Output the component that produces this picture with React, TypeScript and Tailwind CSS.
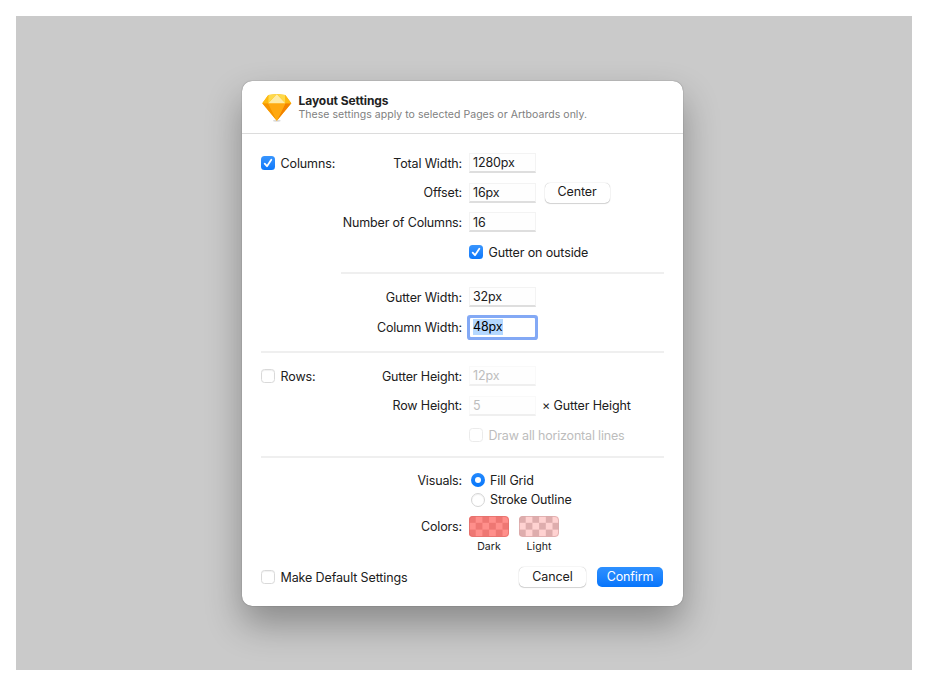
import type { ReactNode } from 'react';
import { clsx } from 'clsx';

function Check({ on, dim, label }: { on?: boolean; dim?: boolean; label: string }) {
  return (
    <div className="flex items-center gap-[5.5px]">
      <span
        className={clsx(
          'flex h-[14px] w-[14px] shrink-0 items-center justify-center rounded-[3.5px]',
          on
            ? 'bg-linear-to-b from-[#3895fd] to-[#0a78fb]'
            : dim
              ? 'border border-[#ebebeb] bg-white'
              : 'border border-[#d9d9d9] bg-white shadow-[inset_0_1px_1px_rgba(0,0,0,0.06)]',
        )}
      >
        {on && (
          <svg width="14" height="14" viewBox="0 0 14 14" fill="none">
            <path d="M3.7 7.6 6 10.2 10.3 3.8" stroke="#fff" strokeWidth="1.8" strokeLinecap="round" strokeLinejoin="round" />
          </svg>
        )}
      </span>
      <span className={clsx('pt-[1px]', dim && 'tracking-[-0.18px] text-[#bdbdbd]')}>{label}</span>
    </div>
  );
}

function Field({ value, dim }: { value: string; dim?: boolean }) {
  return (
    <div
      className={clsx(
        'flex h-[20px] w-[67px] items-center border border-b-2 bg-[#fefefe] pt-[1.5px] pl-[3px]',
        dim ? 'border-[#f9f9f9] border-b-[#efefef] text-[#bdbdbd]' : 'border-[#f3f3f3] border-b-[#dedede]',
      )}
    >
      {value}
    </div>
  );
}

function Row({ left, label, children, className }: { left?: ReactNode; label?: string; children?: ReactNode; className?: string }) {
  return (
    <div className={clsx('flex items-center', className ?? 'h-[20px]')}>
      <div className="flex w-[201px] items-center justify-between">
        <div>{left}</div>
        <div className="pt-[1px] tracking-[-0.16px]">{label}</div>
      </div>
      <div className="ml-[7px] flex items-center">{children}</div>
    </div>
  );
}

function Radio({ on, label }: { on?: boolean; label: string }) {
  return (
    <div className="ml-[2px] flex items-center gap-[5px]">
      <span
        className={clsx(
          'flex h-[14px] w-[14px] items-center justify-center rounded-full',
          on ? 'bg-linear-to-b from-[#2389fd] to-[#0577fb]' : 'border border-[#d5d5d5] bg-white shadow-[inset_0_1px_1px_rgba(0,0,0,0.06)]',
        )}
      >
        {on && <span className="h-[6px] w-[6px] rounded-full bg-white" />}
      </span>
      <span className={on ? 'pt-[1px]' : ''}>{label}</span>
    </div>
  );
}

function Swatch({ base, alt, edge, label }: { base: string; alt: string; edge: string; label: string }) {
  const cells: ReactNode[] = [];
  for (let r = 0; r < 3; r++)
    for (let c = 0; c < 6; c++)
      if ((r + c) % 2 === 0) cells.push(<rect key={`${r}-${c}`} x={c * 6.7} y={r * 6.8} width="6.7" height="6.8" fill={alt} />);
  return (
    <div className="flex flex-col items-center">
      <svg width="40" height="21" viewBox="0 0 40 21" className="rounded-[4px]">
        <rect width="40" height="21" fill={base} />
        {cells}
        <rect x="0.5" y="0.5" width="39" height="20" rx="3.5" fill="none" stroke={edge} strokeOpacity="0.8" />
      </svg>
      <span className="mt-[4px] text-[10.5px] leading-[12px] tracking-[0.05px]">{label}</span>
    </div>
  );
}

function Gem() {
  return (
    <svg width="30" height="30" viewBox="0 0 30 30">
      <ellipse cx="14.8" cy="27.8" rx="3.8" ry="1" fill="#000" opacity="0.14" />
      <path d="M6.3 2 14.8 1l8.5 1 6 8.3-14.5 17.5L.3 10.3z" fill="#fdb300" />
      <path d="M.3 10.3h5.9l8.6 17.5z" fill="#f79400" />
      <path d="M29.3 10.3h-5.9l-8.6 17.5z" fill="#f38200" />
      <path d="M6.2 10.3h17.2l-8.6 17.5z" fill="#ffa910" />
      <path d="M14.8 1 6.2 10.3h17.2z" fill="#feeba6" />
      <path d="M14.8 1 6.3 2l-.1 8.3zM14.8 1l8.5 1 .1 8.3z" fill="#fed94a" />
      <path d="M6.3 2 .3 10.3h5.9zM23.3 2l6 8.3h-5.9z" fill="#fdb912" />
    </svg>
  );
}

export default function App() {
  return (
    <main className="h-[686px] w-[928px] bg-white p-[16px] font-['Inter','Liberation_Sans',sans-serif] text-[12.5px] leading-[16px] tracking-[-0.12px] text-[#202020]">
      <div className="h-[654px] overflow-hidden bg-[#cacaca] pt-[65px] pl-[226px]">
        <section className="h-[525px] w-[441px] rounded-[10px] bg-white whitespace-nowrap shadow-[0_0_1px_rgba(0,0,0,0.6),0_18px_36px_rgba(0,0,0,0.32)]">
          <header className="flex h-[53px] border-b border-[#dcdcdc] pt-[12px] pl-[20px]">
            <Gem />
            <div className="ml-[6.5px]">
              <h1 className="text-[12px] leading-[15px] font-bold tracking-[-0.07px] text-[#222]">Layout Settings</h1>
              <p className="text-[10.5px] leading-[13px] tracking-[0.04px] text-[#808080]">
                These settings apply to selected Pages or Artboards only.
              </p>
            </div>
          </header>
          <div className="pt-[19px] pr-[19px] pl-[19px]">
            <div className="flex flex-col gap-[9.7px]">
              <Row left={<Check on label="Columns:" />} label="Total Width:">
                <Field value="1280px" />
              </Row>
              <Row label="Offset:">
                <Field value="16px" />
                <button className="ml-[8.5px] h-[20px] w-[65px] rounded-[5px] bg-white pb-[1px] shadow-[0_0_1px_rgba(0,0,0,0.35),0_1px_1px_rgba(0,0,0,0.15)]">Center</button>
              </Row>
              <Row label="Number of Columns:">
                <Field value="16" />
              </Row>
              <Row>
                <Check on label="Gutter on outside" />
              </Row>
            </div>
            <div className="mt-[10px] ml-[80px] h-[2px] bg-[#efefef]" />
            <div className="mt-[13px] flex flex-col gap-[10px]">
              <Row label="Gutter Width:">
                <Field value="32px" />
              </Row>
              <Row label="Column Width:">
                <div className="ml-[1px] flex h-[19px] w-[65px] items-center rounded-[1px] bg-white pl-[3px] text-black ring-[3px] ring-[#83a9f5]">
                  <span className="bg-[#b3d7ff]">48px</span>
                </div>
              </Row>
            </div>
            <div className="mt-[14px] h-[2px] bg-[#efefef]" />
            <div className="mt-[13px] flex flex-col gap-[9.7px]">
              <Row left={<Check label="Rows:" />} label="Gutter Height:">
                <Field value="12px" dim />
              </Row>
              <Row label="Row Height:">
                <Field value="5" dim />
                <span className="ml-[6px]">× Gutter Height</span>
              </Row>
              <Row>
                <Check dim label="Draw all horizontal lines" />
              </Row>
            </div>
            <div className="mt-[11px] h-[2px] bg-[#efefef]" />
            <Row label="Visuals:" className="mt-[12px] h-[20px]">
              <Radio on label="Fill Grid" />
            </Row>
            <Row className="h-[19px]">
              <Radio label="Stroke Outline" />
            </Row>
            <div className="mt-[7px] flex items-start">
              <div className="w-[201px] pt-[3px] text-right tracking-[-0.16px]">Colors:</div>
              <div className="ml-[7px] flex gap-[10px]">
                <Swatch base="#ff8f8b" alt="#ee7773" edge="#e46f6b" label="Dark" />
                <Swatch base="#ffd2d1" alt="#deadad" edge="#d9a9a9" label="Light" />
              </div>
            </div>
            <footer className="mt-[14px] flex h-[20px] items-center">
              <Check label="Make Default Settings" />
              <div className="mr-[1px] ml-auto flex gap-[11px]">
                <button className="h-[20px] w-[67px] rounded-[5px] bg-white pb-[1px] shadow-[0_0_1px_rgba(0,0,0,0.35),0_1px_1px_rgba(0,0,0,0.15)]">Cancel</button>
                <button className="h-[20px] w-[66px] rounded-[5px] bg-linear-to-b from-[#2d90ff] to-[#0575fb] pb-[1px] text-white">Confirm</button>
              </div>
            </footer>
          </div>
        </section>
      </div>
    </main>
  );
}
